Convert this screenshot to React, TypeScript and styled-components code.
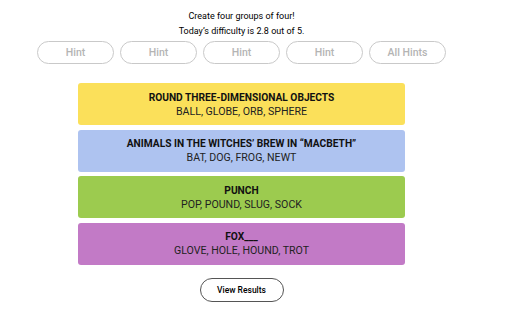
import React from "react";
import styled, { createGlobalStyle } from "styled-components";

const Global = createGlobalStyle`
  html, body { margin: 0; padding: 0; background: #fff; }
  body { font-family: Roboto, "Liberation Sans", Arial, sans-serif; color: #000; }
`;

const Page = styled.div`
  width: 409px;
  margin-left: 37px;
  padding-top: 9px;
  display: flex;
  flex-direction: column;
  align-items: center;
`;

const Intro = styled.p`
  margin: 0;
  font-size: 9px;
  line-height: 15px;
  text-align: center;
`;

const HintRow = styled.div`
  display: flex;
  gap: 6px;
  margin-top: 2px;
  width: 100%;
`;

const HintButton = styled.button`
  flex: 1;
  height: 23px;
  border: 1px solid #c9c9c9;
  border-radius: 12px;
  background: #fff;
  color: #b4b4b4;
  font-family: Roboto, "Liberation Sans", Arial, sans-serif;
  font-size: 10.5px;
  font-weight: 500;
  padding: 0;
`;

const Groups = styled.div`
  width: 327px;
  margin-top: 19px;
  display: flex;
  flex-direction: column;
  gap: 4.5px;
`;

const Group = styled.div<{ $bg: string }>`
  height: 42px;
  border-radius: 3px;
  background: ${(p) => p.$bg};
  display: flex;
  flex-direction: column;
  align-items: center;
  justify-content: center;
  gap: 1px;
`;

const Title = styled.div`
  font-size: 10.2px;
  font-weight: 700;
  line-height: 13px;
  color: #111;
`;

const Words = styled.div`
  font-size: 10.6px;
  line-height: 13px;
  color: #222;
`;

const ResultsButton = styled.button`
  margin-top: 13px;
  width: 84px;
  height: 24px;
  border: 1px solid #555;
  border-radius: 12px;
  background: #fff;
  color: #000;
  font-family: Roboto, "Liberation Sans", Arial, sans-serif;
  font-size: 8.5px;
  font-weight: 500;
  padding: 0;
`;

const groups = [
  { bg: "#fbe05a", title: "ROUND THREE-DIMENSIONAL OBJECTS", words: "BALL, GLOBE, ORB, SPHERE" },
  { bg: "#aec3f0", title: "ANIMALS IN THE WITCHES’ BREW IN “MACBETH”", words: "BAT, DOG, FROG, NEWT" },
  { bg: "#9ccb4f", title: "PUNCH", words: "POP, POUND, SLUG, SOCK" },
  { bg: "#c27ac6", title: "FOX___", words: "GLOVE, HOLE, HOUND, TROT" },
];

export default function App() {
  return (
    <>
      <Global />
      <Page>
        <Intro>Create four groups of four!</Intro>
        <Intro>Today’s difficulty is 2.8 out of 5.</Intro>
        <HintRow>
          <HintButton>Hint</HintButton>
          <HintButton>Hint</HintButton>
          <HintButton>Hint</HintButton>
          <HintButton>Hint</HintButton>
          <HintButton>All Hints</HintButton>
        </HintRow>
        <Groups>
          {groups.map((g) => (
            <Group key={g.title} $bg={g.bg}>
              <Title>{g.title}</Title>
              <Words>{g.words}</Words>
            </Group>
          ))}
        </Groups>
        <ResultsButton>View Results</ResultsButton>
      </Page>
    </>
  );
}
